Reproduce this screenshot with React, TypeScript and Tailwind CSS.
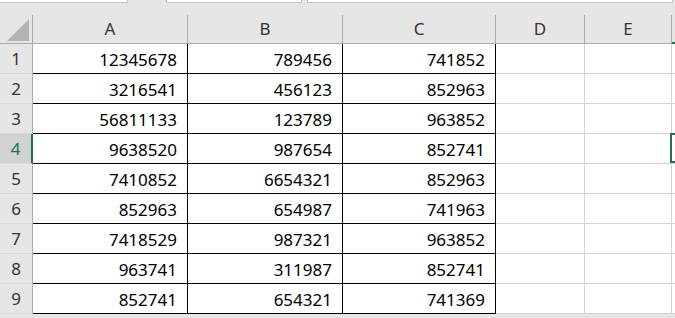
import React from 'react'

const ROWS: [string, string, string][] = [
  ['12345678', '789456', '741852'],
  ['3216541', '456123', '852963'],
  ['56811133', '123789', '963852'],
  ['9638520', '987654', '852741'],
  ['7410852', '6654321', '852963'],
  ['852963', '654987', '741963'],
  ['7418529', '987321', '963852'],
  ['963741', '311987', '852741'],
  ['852741', '654321', '741369'],
]

const COLS = 'grid-cols-[33px_155px_155px_153px_89px_87px_1fr]'
const FONT = { fontFamily: '"Noto Sans", "Noto Sans CJK JP", sans-serif' }

export default function App() {
  return (
    <div className="h-[318px] w-[675px] overflow-hidden bg-[#e6e6e6] text-[17px]" style={FONT}>
      {/* formula bar remnants */}
      <div className="flex h-[15px] items-start">
        <div className="h-[3px] w-[128px] border-b border-r border-[#c6c6c6] bg-white" />
        <div className="ml-[38px] h-[3px] w-[136px] border-b border-x border-[#c6c6c6] bg-white" />
        <div className="ml-[5px] h-[3px] w-[366px] border-b border-x border-[#c6c6c6] bg-white" />
      </div>

      {/* column headers */}
      <div className={`grid h-[29px] ${COLS} border-b border-[#ababab] text-[#333]`}>
        <div className="flex items-end justify-end border-r border-[#ababab] pb-[2px] pr-[3px]">
          <svg width="22" height="22" viewBox="0 0 22 22">
            <polygon points="22,0 22,22 0,22" fill="#b4b4b4" />
          </svg>
        </div>
        {['A', 'B', 'C', 'D', 'E'].map((c) => (
          <div key={c} className="flex items-center justify-center border-r border-[#ababab]">
            {c}
          </div>
        ))}
        <div className="border-b-2 border-[#217346] -mb-px" />
      </div>

      {/* rows */}
      {ROWS.map((r, i) => {
        const active = i === 3
        return (
          <div key={i} className={`grid h-[30px] ${COLS}`}>
            <div
              className={`flex items-center justify-center border-b border-[#d8d8d8] ${
                active
                  ? 'border-r-2 border-r-[#217346] bg-[#d2d2d2] text-[#217346]'
                  : 'border-r border-r-[#ababab] text-[#333]'
              }`}
            >
              {i + 1}
            </div>
            {r.map((v, j) => (
              <div
                key={j}
                className="flex items-center justify-end border-b border-r border-black bg-white pr-[10px] pt-[2px] text-black"
              >
                {v}
              </div>
            ))}
            <div className="border-b border-r border-[#d4d4d4] bg-white" />
            <div className="border-b border-r border-[#d4d4d4] bg-white" />
            <div className="relative border-b border-[#d4d4d4] bg-white">
              {active && (
                <div className="absolute -left-[2px] -top-px bottom-0 right-[-4px] border-2 border-[#217346]" />
              )}
            </div>
          </div>
        )
      })}
    </div>
  )
}
